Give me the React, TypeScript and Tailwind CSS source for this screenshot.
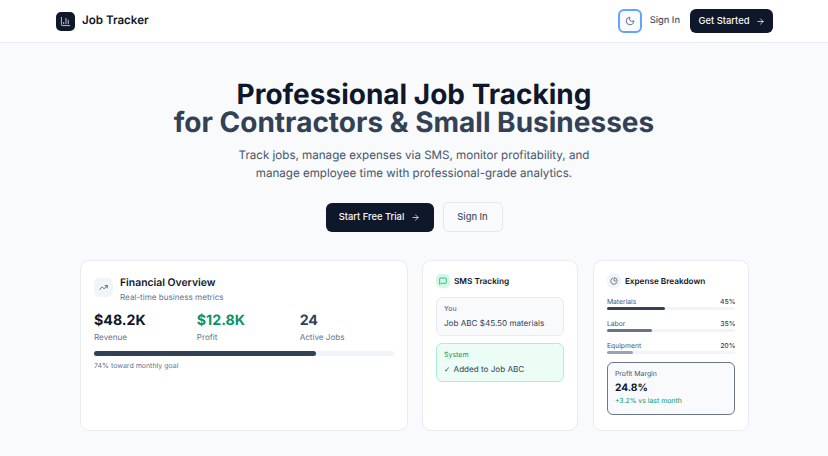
// Job Tracker landing hero: nav bar, headline, calls to action and three preview cards.
import { ArrowRight, ChartColumn, ChartPie, MessageSquare, Moon, TrendingUp } from "lucide-react";

const EXPENSES = [
  { label: "Materials", pct: "45%", bar: "w-[45%] bg-[#334155]" },
  { label: "Labor", pct: "35%", bar: "w-[35%] bg-[#64748b]" },
  { label: "Equipment", pct: "20%", bar: "w-[20%] bg-[#94a3b8]" },
];

const STATS = [
  { value: "$48.2K", label: "Revenue", color: "text-[#0f172a]" },
  { value: "$12.8K", label: "Profit", color: "text-[#059669]" },
  { value: "24", label: "Active Jobs", color: "text-[#334155]" },
];

function Header() {
  return (
    <header className="flex h-[43px] items-center justify-between border-b border-[#e8ecf2] bg-white pl-[56px] pr-[55px]">
      <div className="flex items-center gap-[7px]">
        <div className="flex h-[19px] w-[19px] items-center justify-center rounded-[5px] bg-[#0f172a]">
          <ChartColumn className="h-[11px] w-[11px] text-[#cbd5e1]" />
        </div>
        <span className="text-[11.6px] font-semibold text-[#0f172a]">Job Tracker</span>
      </div>
      <div className="flex items-center">
        <button className="flex h-[24px] w-[24px] items-center justify-center rounded-[6px] border-2 border-[#60a5fa] bg-[#f8fafc]">
          <Moon className="h-[10px] w-[10px] text-[#475569]" />
        </button>
        <span className="ml-[8px] text-[9.3px] font-medium text-[#475569]">Sign In</span>
        <button className="ml-[10px] flex h-[24px] w-[83px] items-center justify-center gap-[6px] rounded-[6px] bg-[#0f172a] text-[9.4px] font-medium text-[#f8fafc]">
          Get Started
          <ArrowRight className="h-[9px] w-[9px]" />
        </button>
      </div>
    </header>
  );
}

function Hero() {
  return (
    <section className="flex flex-col items-center pt-[37px]">
      <h1 className="text-center text-[28px] leading-[28px] font-bold text-[#0f172a]">
        Professional Job Tracking
        <br />
        <span className="text-[#334155]">for Contractors &amp; Small Businesses</span>
      </h1>
      <p className="mt-[10px] text-center text-[11.6px] leading-[18px] text-[#475569]">
        Track jobs, manage expenses via SMS, monitor profitability, and
        <br />
        manage employee time with professional-grade analytics.
      </p>
      <div className="mt-[20px] flex items-center gap-[9px]">
        <button className="flex h-[29px] w-[108px] items-center justify-center gap-[7px] rounded-[6px] bg-[#0f172a] text-[9.35px] font-medium text-[#f8fafc]">
          Start Free Trial
          <ArrowRight className="h-[9px] w-[9px]" />
        </button>
        <button className="flex h-[30px] w-[60px] items-center justify-center rounded-[6px] border border-[#e2e8f0] bg-[#f8fafc] text-[9.35px] font-medium text-[#475569]">
          Sign In
        </button>
      </div>
    </section>
  );
}

function FinancialCard() {
  return (
    <div className="rounded-[9px] border border-[#e8ecf2] bg-white px-[13px] pt-[16px]">
      <div className="flex gap-[7px]">
        <div className="mt-[1px] flex h-[19px] w-[19px] items-center justify-center rounded-[5px] bg-[#f1f5f9]">
          <TrendingUp className="h-[9px] w-[9px] text-[#334155]" />
        </div>
        <div>
          <div className="text-[10.4px] leading-[12px] font-semibold text-[#0f172a]">Financial Overview</div>
          <div className="mt-[2px] text-[8.1px] leading-[12px] text-[#64748b]">Real-time business metrics</div>
        </div>
      </div>
      <div className="mt-[8px] grid grid-cols-3 gap-[9px]">
        {STATS.map((s) => (
          <div key={s.label}>
            <div className={`text-[14.2px] leading-[19px] font-bold ${s.color}`}>{s.value}</div>
            <div className="mt-[1px] text-[8.1px] leading-[12px] text-[#64748b]">{s.label}</div>
          </div>
        ))}
      </div>
      <div className="mt-[8px] h-[5px] rounded-full bg-[#f1f5f9]">
        <div className="h-full w-[74%] rounded-full bg-[#334155]" />
      </div>
      <div className="mt-[5px] text-[7px] leading-[10px] text-[#64748b]">74% toward monthly goal</div>
    </div>
  );
}

function SmsCard() {
  return (
    <div className="rounded-[9px] border border-[#e8ecf2] bg-white px-[13px] pt-[13px]">
      <div className="flex items-center gap-[4px]">
        <div className="flex h-[14px] w-[14px] items-center justify-center rounded-[5px] bg-[#d1fae5]">
          <MessageSquare className="h-[8px] w-[8px] text-[#059669]" />
        </div>
        <span className="text-[8.25px] font-semibold text-[#0f172a]">SMS Tracking</span>
      </div>
      <div className="mt-[9px] h-[39px] rounded-[6px] border border-[#e8ecf2] bg-[#f8fafc] px-[7px] pt-[6px]">
        <div className="text-[7px] leading-[10px] text-[#475569]">You</div>
        <div className="mt-[3px] text-[8.1px] leading-[12px] text-[#334155]">Job ABC $45.50 materials</div>
      </div>
      <div className="mt-[7px] h-[39px] rounded-[6px] border border-[#a7f3d0] bg-[#ecfdf5] px-[7px] pt-[6px]">
        <div className="text-[7px] leading-[10px] text-[#059669]">System</div>
        <div className="mt-[3px] text-[8.1px] leading-[12px] text-[#334155]">
          <span className="mr-[1px] font-['DejaVu_Sans'] text-[7.5px] font-bold">✓</span> Added to Job ABC
        </div>
      </div>
    </div>
  );
}

function ExpenseCard() {
  return (
    <div className="rounded-[9px] border border-[#e8ecf2] bg-white px-[13px] pt-[13px]">
      <div className="flex items-center gap-[4px]">
        <div className="flex h-[14px] w-[14px] items-center justify-center rounded-[5px] bg-[#f1f5f9]">
          <ChartPie className="h-[8px] w-[8px] text-[#334155]" />
        </div>
        <span className="text-[8.2px] font-semibold text-[#0f172a]">Expense Breakdown</span>
      </div>
      <div className="mt-[9px] flex flex-col gap-[9px]">
        {EXPENSES.map((e) => (
          <div key={e.label}>
            <div className="flex justify-between text-[6.8px] leading-[10px]">
              <span className="text-[#475569]">{e.label}</span>
              <span className="font-medium text-[#334155]">{e.pct}</span>
            </div>
            <div className="h-[3px] rounded-full bg-[#f1f5f9]">
              <div className={`h-full rounded-full ${e.bar}`} />
            </div>
          </div>
        ))}
      </div>
      <div className="mt-[8px] h-[53px] rounded-[6px] border border-[#6b7688] bg-[#f8fafc] px-[7px] pt-[6px]">
        <div className="text-[6.9px] leading-[10px] text-[#475569]">Profit Margin</div>
        <div className="mt-[1px] text-[10.2px] leading-[16px] font-bold text-[#0f172a]">24.8%</div>
        <div className="text-[6.9px] leading-[10px] text-[#059669]">+3.2% vs last month</div>
      </div>
    </div>
  );
}

export default function App() {
  return (
    <div className="h-[456px] w-[828px] overflow-hidden bg-[#f8fafc] font-['Inter',sans-serif] [text-rendering:geometricPrecision]">
      <Header />
      <Hero />
      <div className="ml-[80px] mt-[28px] grid h-[171px] w-[670px] grid-cols-[327.5px_156.4px_156.6px] gap-[14.5px]">
        <FinancialCard />
        <SmsCard />
        <ExpenseCard />
      </div>
    </div>
  );
}
